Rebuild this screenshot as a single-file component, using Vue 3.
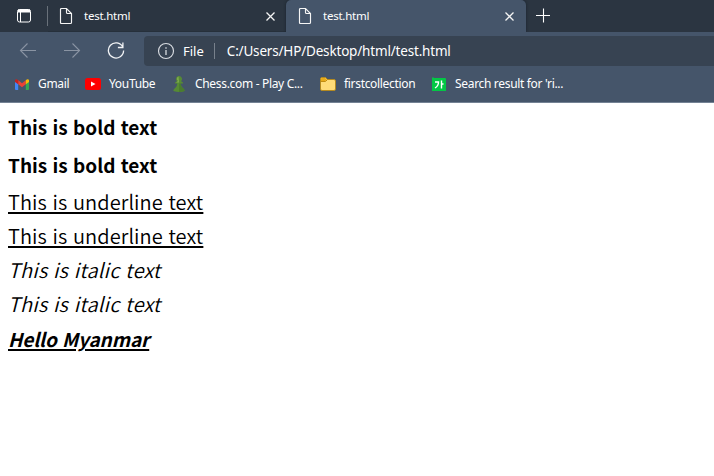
<script setup>
const tabs = [
  { title: 'test.html', active: false },
  { title: 'test.html', active: true },
]
const bookmarks = [
  { icon: 'gmail', label: 'Gmail' },
  { icon: 'youtube', label: 'YouTube' },
  { icon: 'pawn', label: 'Chess.com - Play C...' },
  { icon: 'folder', label: 'firstcollection' },
  { icon: 'search', label: "Search result for 'ri..." },
]
</script>

<template>
  <div class="browser">
    <header class="tabbar">
      <div class="tab-menu">
        <svg width="16" height="16" viewBox="0 0 16 16" fill="none" stroke="#fff">
          <rect x="1.5" y="1.5" width="13" height="12.5" rx="2" />
          <path d="M2 3h12" stroke-width="3" />
          <path d="M4.5 4v10" />
        </svg>
      </div>
      <div v-for="(tab, i) in tabs" :key="i" class="tab" :class="{ active: tab.active }">
        <svg class="doc" width="14" height="18" viewBox="0 0 14 18" fill="none" stroke="#f5f5f5" stroke-width="1.15">
          <path d="M2.500 1.500h5l5 5v9q0 1-1 1h-9q-1 0-1-1v-13q0-1 1-1zM7.500 1.500v4q0 1 1 1h4" />
        </svg>
        <span class="tab-title">{{ tab.title }}</span>
        <svg class="close" width="9" height="9" viewBox="0 0 9 9" stroke="#f4f4f4" stroke-width="1.3">
          <path d="M.5.5l8 8M8.500.5l-8 8" />
        </svg>
      </div>
      <svg class="plus" width="16" height="16" viewBox="0 0 16 16" stroke="#fff" stroke-width="1.1">
        <path d="M1 8.500h14M8.500 1.500v14" />
      </svg>
    </header>

    <div class="toolbar">
      <nav class="nav">
        <svg width="18" height="18" viewBox="0 0 18 18" fill="none" stroke="#8a94a3" stroke-width="1.1">
          <path d="M17 9.500H1.500M8.500 2.500l-7 7 7 7" />
        </svg>
        <svg width="18" height="18" viewBox="0 0 18 18" fill="none" stroke="#8a94a3" stroke-width="1.1">
          <path d="M1 9.500h15.500M9.500 2.500l7 7-7 7" />
        </svg>
        <svg width="18" height="18" viewBox="0 0 18 18" fill="none" stroke="#f2f4f6" stroke-width="1.3">
          <path d="M15.800 6A7.600 7.600 0 1 0 16.600 9.500M15.900 1.500v5h-5" />
        </svg>
      </nav>
      <div class="address">
        <svg width="18" height="18" viewBox="0 0 18 18" fill="none" stroke="#d8dce1" stroke-width="1.15">
          <circle cx="9" cy="9" r="7.500" />
          <path d="M9 8v5M9 5.200v1.500" stroke-width="1.300" />
        </svg>
        <span class="scheme">File</span>
        <span class="sep"></span>
        <span class="url">C:/Users/HP/Desktop/html/test.html</span>
      </div>
    </div>

    <div class="bookmarks">
      <div v-for="b in bookmarks" :key="b.icon" class="bookmark" :class="b.icon">
        <svg v-if="b.icon === 'gmail'" width="14" height="11" viewBox="0 0 14 11">
          <path d="M0 2v8q0 1 1 1h2.200V4z" fill="#4285f4" />
          <path d="M14 2v8q0 1-1 1h-2.200V4z" fill="#34a853" />
          <path d="M3.200 1.300L7 4.200l3.800-2.900v4L7 8.200 3.200 5.300z" fill="#ea4335" />
          <path d="M0 3V1.700C0 0 1.700-.4 3.200 1.300v4z" fill="#c5221f" />
          <path d="M14 3V1.700c0-1.700-1.700-2.100-3.200-.4v4z" fill="#fbbc04" />
        </svg>
        <svg v-else-if="b.icon === 'youtube'" width="16" height="12" viewBox="0 0 16 12">
          <rect width="16" height="12" rx="2.500" fill="#f00" />
          <path d="M6 3.500v5L10.500 6z" fill="#fff" />
        </svg>
        <svg v-else-if="b.icon === 'pawn'" width="12" height="16" viewBox="0 0 12 16">
          <path d="M6 0a3 3 0 0 1 2.100 5.200L10 6.500v1H7.800c.2 2.500 1 3.700 2.600 5 .8.700 1.300 1.500 1.200 2.500Q6 17 .4 15c-.1-1 .4-1.800 1.200-2.500 1.600-1.300 2.400-2.500 2.600-5H2v-1l1.900-1.300A3 3 0 0 1 6 0z" fill="#568a35" />
          <path d="M5.500.5Q3.600 1 4 3.500L5 5 3 6.500h3z" fill="#82ab50" />
          <path d="M6 7.500h1.800c.2 2.500 1 3.700 2.600 5 .8.700 1.300 1.500 1.200 2.500Q8 16 6 16z" fill="#4a7c2f" />
        </svg>
        <svg v-else-if="b.icon === 'folder'" width="16" height="14" viewBox="0 0 16 14">
          <path d="M.5 2Q.5.500 2 .5h3.500l2 2H14q1.500 0 1.500 1.500v8q0 1.500-1.500 1.500H2Q.5 13.500.5 12z" fill="#ffdc78" stroke="#b48a20" />
          <path d="M1 2q0-1 1-1h3.200l1.600 1.500L5.500 4H1z" fill="#e8aa18" />
          <path d="M1 4.500h4.500l2-2" fill="none" stroke="#c18d12" />
        </svg>
        <svg v-else width="14" height="14" viewBox="0 0 14 14">
          <path d="M0 1l1-1 1 1h11q1 0 1 1v12H0z" fill="#03c745" />
          <path d="M3 5h3.500Q6.500 9 3 11M9.500 3.500v8M9.500 7h2" fill="none" stroke="#fff" stroke-width="1.400" />
        </svg>
        <span>{{ b.label }}</span>
      </div>
    </div>

    <main class="page">
      <p class="bold"><b>This is bold text</b></p>
      <p class="bold"><strong>This is bold text</strong></p>
      <p><u>This is underline text</u></p>
      <p><ins>This is underline text</ins></p>
      <p class="italic"><i>This is italic text</i></p>
      <p class="italic"><em>This is italic text</em></p>
      <p class="hello"><b><i><u>Hello Myanmar</u></i></b></p>
    </main>
  </div>
</template>

<style>
body { background: #fff; }
</style>

<style scoped>
.browser {
  width: 714px;
  height: 476px;
  overflow: hidden;
  background: #fff;
  color: #fff;
  font: 12px/16px "Noto Sans", "Open Sans", sans-serif;
  white-space: nowrap;
}
svg { display: block; flex: none; }
.tabbar { display: flex; height: 32px; background: #2b3541; }
.tab-menu {
  box-sizing: border-box;
  width: 48px;
  height: 20px;
  margin-top: 6px;
  padding: 2px 0 0 16px;
  border-right: 1px solid #69717a;
}
.tab {
  box-sizing: border-box;
  display: flex;
  align-items: center;
  width: 238px;
  padding: 0 11px 0 11px;
  box-shadow: inset 0 -1px #26303b;
}
.tab.active {
  width: 240px;
  padding: 0 12px;
  background: #45556a;
  border-radius: 5px 5px 0 0;
  box-shadow: 0 0 3px #18212b;
  clip-path: inset(0 -3px 0 -3px);
}
.tab-title { margin-left: 11px; font-size: 11.5px; letter-spacing: -0.25px; }
.close { margin: 1px 0 0 auto; }
.plus { margin: 7px 0 0 9px; }
.toolbar { display: flex; height: 34px; padding-top: 4px; box-sizing: border-box; background: #45556a; }
.nav { display: flex; gap: 26px; width: 125px; padding: 5px 0 0 19px; }
.address {
  display: flex;
  align-items: center;
  flex: 1;
  height: 30px;
  padding-left: 13px;
  border-radius: 4px 0 0 4px;
  background: #374352;
  font-size: 13px;
}
.scheme { margin-left: 8px; }
.sep { width: 1px; height: 16px; margin: 0 12px 0 10px; background: #78818c; }
.url { font-size: 13.5px; letter-spacing: -0.18px; }
.bookmarks {
  display: flex;
  align-items: center;
  box-sizing: border-box;
  height: 37px;
  padding-left: 15px;
  border-bottom: 1px solid #748294;
  background: #45556a;
}
.bookmark { display: flex; align-items: center; box-sizing: border-box; gap: 9px; letter-spacing: -0.32px; }
.gmail { width: 70px; }
.youtube { width: 88px; gap: 8px; }
.pawn { width: 147px; gap: 10px; }
.folder { width: 112px; gap: 8px; }
.page {
  padding: 7px 8px 0;
  color: #000;
  font: 350 20px/34px "Noto Sans CJK SC", "Noto Sans", sans-serif;
  letter-spacing: 0.1px;
  word-spacing: 1px;
}
.page p { height: 34px; margin: 0; }
.page .bold { height: 38px; }
.page .bold + .bold { height: 37px; }
.page .italic { letter-spacing: 0.2px; }
.page .hello { padding-top: 1px; }
.page b, .page strong { font-weight: 700; font-size: 19px; letter-spacing: 0; }
.page .hello b { letter-spacing: -0.1px; }
.page u, .page ins { text-decoration: underline; text-decoration-thickness: 2px; text-underline-offset: 2px; }
</style>
